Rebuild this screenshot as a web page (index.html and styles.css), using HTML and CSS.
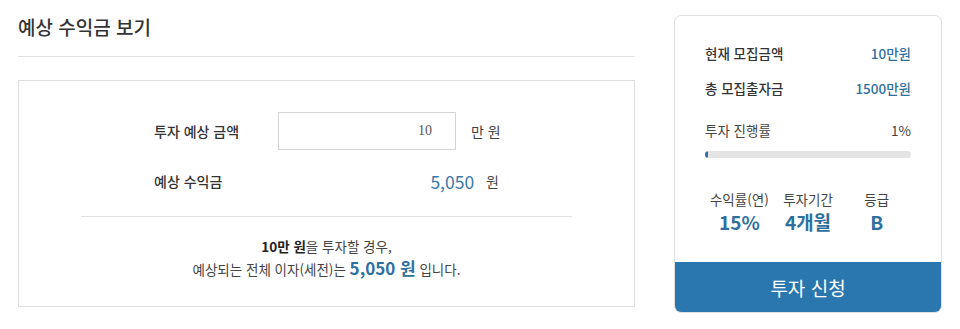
FILE: index.html
```html
<!DOCTYPE html>
<html lang="ko">
<head>
<meta charset="utf-8">
<link rel="stylesheet" href="styles.css">
</head>
<body>
<div class="page">
  <section class="calc">
    <h2 class="calc-title">예상 수익금 보기</h2>
    <div class="calc-box">
      <div class="calc-rows">
        <div class="calc-row">
          <span class="calc-label">투자 예상 금액</span>
          <div class="calc-field">
            <input class="calc-input" type="text" value="10">
            <span class="calc-unit">만 원</span>
          </div>
        </div>
        <div class="calc-row calc-row-result">
          <span class="calc-label">예상 수익금</span>
          <div class="calc-result">
            <span class="calc-value">5,050</span>
            <span class="calc-unit">원</span>
          </div>
        </div>
      </div>
      <div class="calc-sep"></div>
      <p class="calc-summary"><strong>10만 원</strong>을 투자할 경우,<br>예상되는 전체 이자(세전)는 <b class="calc-hl">5,050 원</b> 입니다.</p>
    </div>
  </section>
  <aside class="card">
    <div class="card-body">
      <div class="info-row"><span class="info-label">현재 모집금액</span><span class="info-value">10만원</span></div>
      <div class="info-row"><span class="info-label">총 모집출자금</span><span class="info-value">1500만원</span></div>
      <div class="info-row info-progress"><span class="info-label light">투자 진행률</span><span class="info-pct">1%</span></div>
      <div class="bar"><div class="bar-fill" style="width:1%"></div></div>
      <div class="stats">
        <div class="stat"><span class="stat-label">수익률(연)</span><span class="stat-value">15%</span></div>
        <div class="stat"><span class="stat-label">투자기간</span><span class="stat-value">4개월</span></div>
        <div class="stat"><span class="stat-label">등급</span><span class="stat-value">B</span></div>
      </div>
    </div>
    <button class="apply" type="button">투자 신청</button>
  </aside>
</div>
</body>
</html>
```
FILE: styles.css
```css
* { box-sizing: border-box; }
html, body { margin: 0; padding: 0; background: #fff; }
body {
  font-family: "Noto Sans CJK KR", "Noto Sans", sans-serif;
  color: #333;
  width: 960px;
  height: 329px;
  overflow: hidden;
}
.page {
  display: flex;
  align-items: flex-start;
  padding: 15px 18px 0 18px;
  gap: 39px;
}
.calc { width: 617px; flex-shrink: 0; }
.calc-title {
  margin: 0;
  padding: 0 0 18px 0;
  font-size: 19px;
  line-height: 23px;
  font-weight: 500;
  color: #333;
  border-bottom: 1px solid #e2e2e2;
}
.calc-box {
  margin-top: 23px;
  border: 1px solid #dedede;
  padding: 31px 0 26px 0;
}
.calc-rows {
  width: 345px;
  margin: 0 auto;
}
.calc-row {
  display: flex;
  align-items: center;
}
.calc-label {
  width: 124px;
  flex-shrink: 0;
  font-size: 14px;
  font-weight: 500;
  color: #333;
  white-space: nowrap;
}
.calc-field { display: flex; align-items: center; }
.calc-input {
  width: 178px;
  height: 38px;
  flex-shrink: 0;
  border: 1px solid #d5d5d5;
  padding: 0 23px 0 0;
  margin: 0;
  text-align: right;
  font-family: "Liberation Serif", serif;
  font-size: 14px;
  color: #555;
  outline: none;
  background: #fff;
}
.calc-unit {
  font-size: 14px;
  color: #444;
  white-space: nowrap;
  flex-shrink: 0;
}
.calc-field .calc-unit { margin-left: 15px; }
.calc-row-result { margin-top: 16px; height: 30px; }
.calc-result {
  flex: 1;
  display: flex;
  justify-content: flex-end;
  align-items: center;
}
.calc-value {
  font-size: 17.5px;
  color: #3a77a6;
  margin-right: 12px;
}
.calc-sep {
  height: 1px;
  background: #e2e2e2;
  margin: 20px 62px 18px 62px;
}
.calc-summary {
  margin: 0;
  text-align: center;
  font-size: 13.5px;
  line-height: 22px;
  color: #444;
}
.calc-summary strong { font-weight: 700; color: #222; }
.calc-hl {
  font-size: 17px;
  font-weight: 700;
  color: #2e6fa1;
}
.card {
  width: 268px;
  height: 298px;
  flex-shrink: 0;
  border: 1px solid #e0e0e0;
  border-radius: 7px;
  display: flex;
  flex-direction: column;
  overflow: hidden;
}
.card-body {
  flex: 1;
  padding: 26px 30px 0 30px;
}
.info-row {
  display: flex;
  justify-content: space-between;
  align-items: center;
  height: 22px;
  font-size: 13.5px;
  margin-bottom: 13px;
}
.info-label { font-weight: 500; color: #333; }
.info-label.light { font-weight: 400; color: #444; }
.info-value { font-weight: 500; color: #2f6f9e; }
.info-pct { color: #444; }
.info-progress { margin-top: 20px; margin-bottom: 10px; }
.bar {
  height: 7px;
  background: #e4e4e4;
  border-radius: 4px;
  overflow: hidden;
}
.bar-fill {
  height: 100%;
  background: #2f6f9e;
  border-radius: 4px;
  min-width: 3px;
}
.stats {
  display: flex;
  justify-content: center;
  margin-top: 32px;
}
.stat {
  width: 69px;
  display: flex;
  flex-direction: column;
  align-items: center;
  white-space: nowrap;
}
.stat-label { font-size: 13.5px; line-height: 18px; color: #444; }
.stat-value { font-size: 19px; line-height: 28px; font-weight: 700; color: #2f6f9e; }
.apply {
  display: block;
  width: 100%;
  height: 50px;
  border: none;
  margin: 0;
  background: #2a77b0;
  color: #fff;
  font-family: "Noto Sans CJK KR", "Noto Sans", sans-serif;
  font-size: 19px;
  font-weight: 400;
  cursor: pointer;
}
```
